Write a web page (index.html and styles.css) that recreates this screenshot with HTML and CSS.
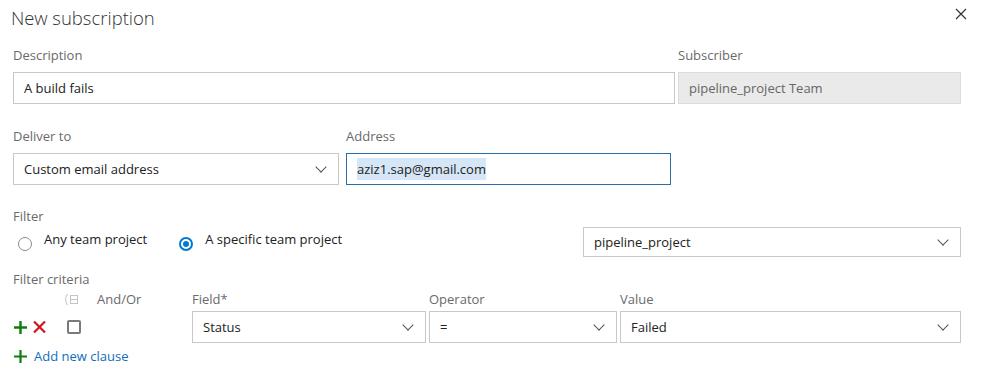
FILE: index.html
```html
<!DOCTYPE html>
<html lang="en">
<head>
  <meta charset="UTF-8" />
  <title>New subscription</title>
  <link rel="stylesheet" href="styles.css">
</head>
<body>
  <div class="dialog">
    <header class="dialog-head">
      <h1 class="title">New subscription</h1>
      <button class="close-btn" aria-label="Close">
        <svg width="12" height="12" viewBox="0 0 12 12"><path d="M1 1 L11 11 M11 1 L1 11" stroke="#333" stroke-width="1.2" fill="none"/></svg>
      </button>
    </header>

    <div class="row row-top">
      <div class="field">
        <div class="label">Description</div>
        <div class="box">A build fails</div>
      </div>
      <div class="field">
        <div class="label">Subscriber</div>
        <div class="box box-disabled">pipeline_project Team</div>
      </div>
    </div>

    <div class="row row-deliver">
      <div class="field">
        <div class="label">Deliver to</div>
        <div class="box select">Custom email address<span class="chevron"></span></div>
      </div>
      <div class="field">
        <div class="label">Address</div>
        <div class="box box-focus"><span class="selected-text">aziz1.sap@gmail.com</span></div>
      </div>
    </div>

    <div class="filter">
      <div class="label">Filter</div>
      <div class="filter-row">
        <label class="radio"><span class="radio-mark"></span>Any team project</label>
        <label class="radio radio-on"><span class="radio-mark"></span>A specific team project</label>
        <div class="box select project-select">pipeline_project<span class="chevron"></span></div>
      </div>
    </div>

    <div class="criteria">
      <div class="label">Filter criteria</div>
      <div class="criteria-grid">
        <div></div>
        <div class="group-head">
          <svg class="group-icon" width="13" height="11" viewBox="0 0 13 11"><path d="M3 0.5 Q1 0.5 1 2.5 L1 4 Q1 5.5 0 5.5 Q1 5.5 1 7 L1 8.5 Q1 10.5 3 10.5" stroke="#c4c4c4" fill="none"/><rect x="5.5" y="1.5" width="7" height="8" stroke="#c4c4c4" fill="none"/><path d="M5.5 5.5 H12.5" stroke="#c4c4c4"/></svg>
          <span class="col-head">And/Or</span>
        </div>
        <div class="col-head">Field*</div>
        <div class="col-head">Operator</div>
        <div class="col-head">Value</div>

        <div class="row-actions">
          <svg width="13" height="13" viewBox="0 0 13 13"><path d="M6.5 0 V13 M0 6.5 H13" stroke="#107c10" stroke-width="2.4"/></svg>
          <svg width="13" height="12" viewBox="0 0 13 12"><path d="M1 0.5 L12 11.5 M12 0.5 L1 11.5" stroke="#d2161e" stroke-width="2.2"/></svg>
        </div>
        <div class="group-cell"><span class="checkbox"></span></div>
        <div class="box select">Status<span class="chevron"></span></div>
        <div class="box select">=<span class="chevron"></span></div>
        <div class="box select">Failed<span class="chevron"></span></div>
      </div>
      <a class="add-clause" href="#">
        <svg width="13" height="13" viewBox="0 0 13 13"><path d="M6.5 0 V13 M0 6.5 H13" stroke="#107c10" stroke-width="2.2"/></svg>
        Add new clause
      </a>
    </div>
  </div>
</body>
</html>
```

FILE: styles.css
```css
body {
  margin: 0;
  background: #fff;
  color: #212121;
  font-family: 'Open Sans', 'Noto Sans', sans-serif;
  font-size: 13px;
}

.dialog {
  padding: 0 25px 0 13px;
}

.dialog-head {
  display: flex;
  align-items: center;
  justify-content: space-between;
  height: 36px;
}

.title {
  margin: 0 0 0 -2px;
  font-family: 'Open Sans Light', 'Open Sans', sans-serif;
  font-size: 18.5px;
  font-weight: 300;
  line-height: 36px;
  color: #333;
}

.close-btn {
  background: none;
  border: none;
  padding: 0;
  margin-right: -6px;
  margin-top: -8px;
  display: flex;
}

.label {
  font-size: 13px;
  line-height: 20px;
  color: #6a6a6a;
}

.row {
  display: grid;
}

.row-top {
  margin-top: 9px;
  grid-template-columns: 662px 1fr;
  column-gap: 3px;
}

.row-deliver {
  margin-top: 22px;
  grid-template-columns: 326px 325px;
  column-gap: 7px;
}

.field .label {
  margin-bottom: 7px;
}

.box {
  box-sizing: border-box;
  height: 32px;
  display: flex;
  align-items: center;
  padding: 0 10px;
  border: 1px solid #c8c8c8;
  background: #fff;
  white-space: nowrap;
}

.box-disabled {
  background: #eaeaea;
  border-color: #dcdcdc;
  color: #666;
}

.box-focus {
  border-color: #2b6da6;
}

.selected-text {
  background: #d5e6f6;
  padding: 2px 0;
}

.select {
  justify-content: space-between;
}

.chevron {
  width: 7px;
  height: 7px;
  border-right: 1px solid #555;
  border-bottom: 1px solid #555;
  transform: rotate(45deg);
  margin: -5px 3px 0 0;
}

.filter {
  margin-top: 21px;
}

.filter-row {
  display: flex;
  align-items: flex-start;
  margin-top: 1px;
  height: 30px;
}

.radio {
  display: flex;
  align-items: flex-start;
  gap: 12px;
  line-height: 20px;
  margin-top: 2px;
  margin-left: 5px;
  margin-right: 32px;
}

.radio + .radio {
  margin-left: 0;
}

.radio-mark {
  box-sizing: border-box;
  width: 14px;
  height: 14px;
  margin-top: 8px;
  border: 1.5px solid #8a8a8a;
  border-radius: 50%;
  display: flex;
  align-items: center;
  justify-content: center;
}

.radio-on .radio-mark {
  border: 2px solid #0078d4;
}

.radio-on .radio-mark::after {
  content: "";
  width: 6px;
  height: 6px;
  border-radius: 50%;
  background: #0078d4;
}

.project-select {
  margin-left: auto;
  width: 378px;
  height: 30px;
}

.criteria {
  margin-top: 12px;
}

.criteria-grid {
  display: grid;
  grid-template-columns: 49px 124px 234px 188px 1fr;
  grid-template-rows: 20px 32px;
  column-gap: 3px;
  row-gap: 2px;
}

.col-head {
  font-size: 13px;
  line-height: 20px;
  color: #6a6a6a;
}

.group-head {
  display: flex;
  align-items: center;
  gap: 19px;
}

.row-actions {
  display: flex;
  align-items: center;
  gap: 6px;
  padding-left: 1px;
}

.group-cell {
  display: flex;
  align-items: center;
  padding-left: 2px;
}

.checkbox {
  box-sizing: border-box;
  width: 14px;
  height: 14px;
  border: 2px solid #7a7a7a;
  border-radius: 2px;
}

.add-clause {
  display: flex;
  align-items: center;
  gap: 7px;
  margin-top: 3px;
  padding-left: 1px;
  line-height: 20px;
  font-size: 13px;
  color: #106ebe;
  text-decoration: none;
}
```
